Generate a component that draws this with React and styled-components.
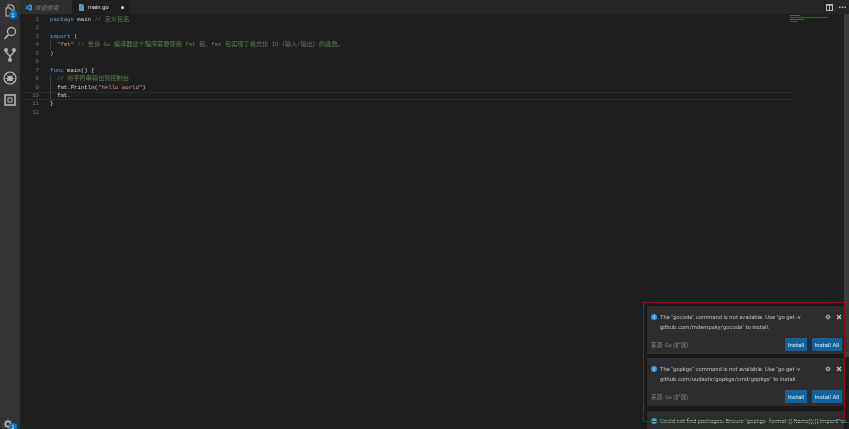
import React from "react";
import styled, { createGlobalStyle } from "styled-components";

const GlobalStyle = createGlobalStyle`
  html, body { margin: 0; padding: 0; background: #1e1e1e; overflow: hidden; }
  * { box-sizing: border-box; }
`;

const Window = styled.div`
  position: relative;
  width: 849px;
  height: 429px;
  display: flex;
  overflow: hidden;
  background: #1e1e1e;
  font-family: "Liberation Sans", "Noto Sans CJK SC", sans-serif;
  filter: blur(0.45px);
`;

const ActivityBar = styled.div`
  width: 20px;
  flex-shrink: 0;
  display: flex;
  flex-direction: column;
  align-items: center;
  gap: 8.5px;
  padding-top: 3px;
  background: #333333;
`;

const ActivityItem = styled.div`
  position: relative;
  width: 14px;
  height: 14px;
  color: #b4b4b4;
  margin-top: ${(p) => (p.$bottom ? "auto" : "0")};
`;

const Badge = styled.span`
  position: absolute;
  left: 6px;
  top: 8px;
  width: 8px;
  height: 8px;
  border-radius: 50%;
  background: #007acc;
  color: #fff;
  font-size: 5px;
  line-height: 8px;
  text-align: center;
`;

const Main = styled.div`
  flex: 1;
  display: flex;
  flex-direction: column;
  min-width: 0;
`;

const TabBar = styled.div`
  height: 14px;
  display: flex;
  align-items: stretch;
  background: #252526;
`;

const Tab = styled.div`
  width: ${(p) => p.$width}px;
  display: flex;
  align-items: center;
  gap: ${(p) => (p.$active ? "4px" : "3px")};
  padding-left: ${(p) => (p.$active ? "7px" : "5px")};
  background: ${(p) => (p.$active ? "#1e1e1e" : "#2d2d2d")};
  color: ${(p) => (p.$active ? "#e8e8e8" : "#858585")};
  font-size: 5.8px;
  font-style: ${(p) => (p.$active ? "normal" : "italic")};
`;

const TabDot = styled.span`
  width: 3px;
  height: 3px;
  margin-left: 8px;
  border-radius: 50%;
  background: #d8d8d8;
`;

const TabActions = styled.div`
  margin-left: auto;
  display: flex;
  align-items: center;
  gap: 6px;
  padding-right: 3px;
  color: #b8b8b8;
`;

const Editor = styled.div`
  flex: 1;
  padding-top: 2px;
  font-family: "Liberation Mono", "Noto Sans CJK SC", monospace;
  font-size: 5.7px;
  color: #cfcfcf;
`;

const Line = styled.div`
  height: 8.45px;
  line-height: 8.45px;
  display: flex;
  box-shadow: ${(p) => (p.$current ? "inset 0 1px #2a2a2a, inset 0 -1px #2a2a2a" : "none")};
  margin-right: 56px;
`;

const LineNumber = styled.span`
  width: 19px;
  margin-right: 11px;
  text-align: right;
  color: #6e6e6e;
  flex-shrink: 0;
`;

const Guide = styled.span`
  width: 7px;
  flex-shrink: 0;
  border-left: 1px solid #404040;
`;

const CodeText = styled.span`
  white-space: pre;
`;

const Keyword = styled.span`color: #569cd6;`;
const Comment = styled.span`color: #55824a;`;
const Str = styled.span`color: #ce9178;`;
const Fn = styled.span`color: #dcdcaa;`;
const Wide = styled.span`font-size: 6.2px;`;

const Minimap = styled.div`
  position: absolute;
  left: 790px;
  top: 15px;
  width: 40px;
  display: flex;
  flex-direction: column;
  gap: 1px;
`;

const MiniRow = styled.div`
  height: 1px;
  width: ${(p) => p.$width}px;
  background: ${(p) => p.$color};
`;

const ScrollThumb = styled.div`
  position: absolute;
  right: 0;
  top: 14px;
  width: 5px;
  height: 343px;
  background: #3c3c3c;
`;

const Toasts = styled.div`
  position: absolute;
  left: 647px;
  top: 306px;
  width: 197px;
  display: flex;
  flex-direction: column;
  gap: 4px;
`;

const Toast = styled.div`
  height: ${(p) => (p.$short ? "24px" : "48px")};
  flex-shrink: 0;
  margin-top: ${(p) => (p.$short ? "1px" : "0")};
  padding: ${(p) => (p.$short ? "7px" : "8px")} 2px 3px 4px;
  display: flex;
  flex-direction: column;
  background: #2d2d30;
  box-shadow: 0 0 3px #111;
  color: #bdbdbd;
  font-family: Roboto, "Noto Sans CJK SC", sans-serif;
  font-size: 5.85px;
`;

const ToastHead = styled.div`
  display: flex;
  align-items: flex-start;
  gap: 3px;
`;

const InfoIcon = styled.span`
  width: 6px;
  height: 6px;
  flex-shrink: 0;
  border-radius: 50%;
  background: #2e9bea;
  color: #fff;
  font-size: 5px;
  line-height: 6px;
  text-align: center;
`;

const Message = styled.div`
  flex: 1;
  min-width: 0;
  line-height: 10px;
  margin-top: -2px;
`;

const OneLine = styled(Message)`
  white-space: nowrap;
`;

const ToastTools = styled.div`
  width: 17px;
  display: flex;
  justify-content: space-between;
  color: #c5c5c5;
`;

const ToastFoot = styled.div`
  margin-top: auto;
  display: flex;
  align-items: center;
  gap: 5px;
`;

const Source = styled.span`
  margin-right: auto;
  color: #858585;
  font-size: 5.6px;
`;

const InstallButton = styled.button`
  width: ${(p) => p.$width}px;
  height: 13px;
  padding: 0;
  border: none;
  background: #0e639c;
  color: #e8e8e8;
  font: 6px Roboto, sans-serif;
`;

const RedFrame = styled.div`
  position: absolute;
  left: 643px;
  top: 302px;
  width: 202px;
  height: 120px;
  border: 1px solid #8c1414;
  pointer-events: none;
`;

const FilesIcon = () => (
  <svg width="14" height="14" viewBox="0 0 14 14" fill="none" stroke="currentColor" strokeWidth="1.1">
    <path d="M3 5h4l2 2v6H3z" />
    <path d="M5 5V2h4l2 2v6H9" />
  </svg>
);
const SearchIcon = () => (
  <svg width="14" height="14" viewBox="0 0 14 14" fill="none" stroke="currentColor" strokeWidth="1.3">
    <circle cx="8.5" cy="5.5" r="4" />
    <path d="M5.5 8.5L1.5 13" strokeWidth="1.7" />
  </svg>
);
const GitIcon = () => (
  <svg width="14" height="14" viewBox="0 0 14 14" fill="none" stroke="currentColor" strokeWidth="1.4">
    <path d="M3 1v2c0 3 4 3.500 4 6M11 1v2c0 3-4 3.500-4 6v4" />
    <circle cx="3" cy="2" r="1.300" />
    <circle cx="11" cy="2" r="1.300" />
    <circle cx="7" cy="12" r="1.300" />
  </svg>
);
const DebugIcon = () => (
  <svg width="14" height="14" viewBox="0 0 14 14" fill="none" stroke="currentColor">
    <circle cx="7" cy="7" r="6" strokeWidth="1.2" />
    <circle cx="7" cy="7.500" r="2.800" fill="currentColor" stroke="none" />
    <path d="M3.500 3.500l7 7M10.500 3.500l-7 7M2.500 7.500h9" strokeWidth="0.8" />
  </svg>
);
const ExtensionsIcon = () => (
  <svg width="14" height="14" viewBox="0 0 14 14" fill="none" stroke="currentColor" strokeWidth="1.6">
    <rect x="2" y="2" width="10" height="10" />
    <rect x="5" y="5" width="4" height="4" strokeWidth="1" />
  </svg>
);
const GearIcon = ({ size = 10 }) => (
  <svg width={size} height={size} viewBox="0 0 10 10" fill="none" stroke="currentColor">
    <circle cx="5" cy="5" r="2.400" strokeWidth="1.500" />
    <path d="M5 0.500v1.500M5 8v1.500M0.500 5h1.500M8 5h1.500M1.800 1.800l1 1M7.200 7.200l1 1M8.200 1.800l-1 1M2.800 7.200l-1 1" strokeWidth="1.200" />
  </svg>
);
const CloseIcon = () => (
  <svg width="6" height="6" viewBox="0 0 6 6" stroke="currentColor" strokeWidth="1.200">
    <path d="M1 1l4 4M5 1l-4 4" />
  </svg>
);
const VsIcon = () => (
  <svg width="7" height="7" viewBox="0 0 7 7" fill="#2f8fd8">
    <path d="M5 0l2 1v5L5 7 2 4.500 0.800 5.500 0 5l1.500-1.500L0 2l0.800-0.500L2 2.500zM5 2L3 3.500 5 5z" />
  </svg>
);
const GoFileIcon = () => (
  <svg width="5" height="7" viewBox="0 0 5 7" fill="#519aba">
    <path d="M0 0h3.500L5 1.500V7H0z" />
  </svg>
);
const SplitIcon = () => (
  <svg width="7" height="7" viewBox="0 0 7 7" fill="none" stroke="currentColor">
    <rect x="0.500" y="0.500" width="6" height="6" />
    <path d="M3.500 0.500v6" />
    <path d="M0.500 1.200h6" strokeWidth="1.200" />
  </svg>
);
const MoreIcon = () => (
  <svg width="7" height="3" viewBox="0 0 7 3" fill="currentColor">
    <rect x="0" y="0.500" width="1.500" height="1.500" />
    <rect x="2.700" y="0.500" width="1.500" height="1.500" />
    <rect x="5.400" y="0.500" width="1.500" height="1.500" />
  </svg>
);

// chinese glyphs run a bit wider than the mono latin ones in the screenshot
const withWide = (text) =>
  text.split(/([\u3000-\u303f\u4e00-\u9fff\uff00-\uffef]+)/).map((chunk, i) =>
    i % 2 ? <Wide key={i}>{chunk}</Wide> : chunk
  );

const code = [
  [<Keyword>package</Keyword>, " main ", <Comment>{withWide("// 定义包名")}</Comment>],
  [],
  [<Keyword>import</Keyword>, " ("],
  ["guide", <Str>"fmt"</Str>, " ", <Comment>{withWide("// 告诉 Go 编译器这个程序需要使用 fmt 包，fmt 包实现了格式化 IO（输入/输出）的函数。")}</Comment>],
  [")"],
  [],
  [<Keyword>func</Keyword>, " ", <Fn>main</Fn>, "() {"],
  ["guide", <Comment>{withWide("// 将字符串输出到控制台")}</Comment>],
  ["guide", "fmt.", <Fn>Println</Fn>, "(", <Str>"hello world"</Str>, ")"],
  ["guide", "fmt."],
  ["}"],
  [],
];

const miniRows = [
  [10, "#3c5a73"], [38, "#3f5a3a"], [14, "#5a5a5a"], [8, "#4a4a4a"],
];

const NotificationToast = ({ children }) => (
  <Toast>
    <ToastHead>
      <InfoIcon>i</InfoIcon>
      <Message>{children}</Message>
      <ToastTools>
        <GearIcon size={6} />
        <CloseIcon />
      </ToastTools>
    </ToastHead>
    <ToastFoot>
      <Source>来源: Go (扩展)</Source>
      <InstallButton $width={22}>Install</InstallButton>
      <InstallButton $width={30}>Install All</InstallButton>
    </ToastFoot>
  </Toast>
);

export default function App() {
  return (
    <Window>
      <GlobalStyle />
      <ActivityBar>
        <ActivityItem><FilesIcon /><Badge>1</Badge></ActivityItem>
        <ActivityItem><SearchIcon /></ActivityItem>
        <ActivityItem><GitIcon /></ActivityItem>
        <ActivityItem><DebugIcon /></ActivityItem>
        <ActivityItem><ExtensionsIcon /></ActivityItem>
        <ActivityItem $bottom><GearIcon /><Badge>1</Badge></ActivityItem>
      </ActivityBar>
      <Main>
        <TabBar>
          <Tab $width={52}><VsIcon />欢迎使用</Tab>
          <Tab $width={58} $active><GoFileIcon />main.go<TabDot /></Tab>
          <TabActions><SplitIcon /><MoreIcon /></TabActions>
        </TabBar>
        <Editor>
          {code.map((parts, i) => (
            <Line key={i} $current={i === 9}>
              <LineNumber>{i + 1}</LineNumber>
              {parts[0] === "guide" && <Guide />}
              <CodeText>
                {parts.filter((part) => part !== "guide").map((part, j) => (
                  <React.Fragment key={j}>{part}</React.Fragment>
                ))}
              </CodeText>
            </Line>
          ))}
        </Editor>
      </Main>
      <Minimap>
        {miniRows.map(([width, color], i) => (
          <MiniRow key={i} $width={width} $color={color} />
        ))}
      </Minimap>
      <ScrollThumb />
      <Toasts>
        <NotificationToast>
          The "gocode" command is not available. Use "go get -v github.com/mdempsky/gocode" to install.
        </NotificationToast>
        <NotificationToast>
          The "gopkgs" command is not available. Use "go get -v github.com/uudashr/gopkgs/cmd/gopkgs" to install.
        </NotificationToast>
        <Toast $short>
          <ToastHead>
            <InfoIcon>i</InfoIcon>
            <OneLine>Could not find packages. Ensure `gopkgs -format {"{{.Name}};{{.ImportPat..."}</OneLine>
          </ToastHead>
        </Toast>
      </Toasts>
      <RedFrame />
    </Window>
  );
}
